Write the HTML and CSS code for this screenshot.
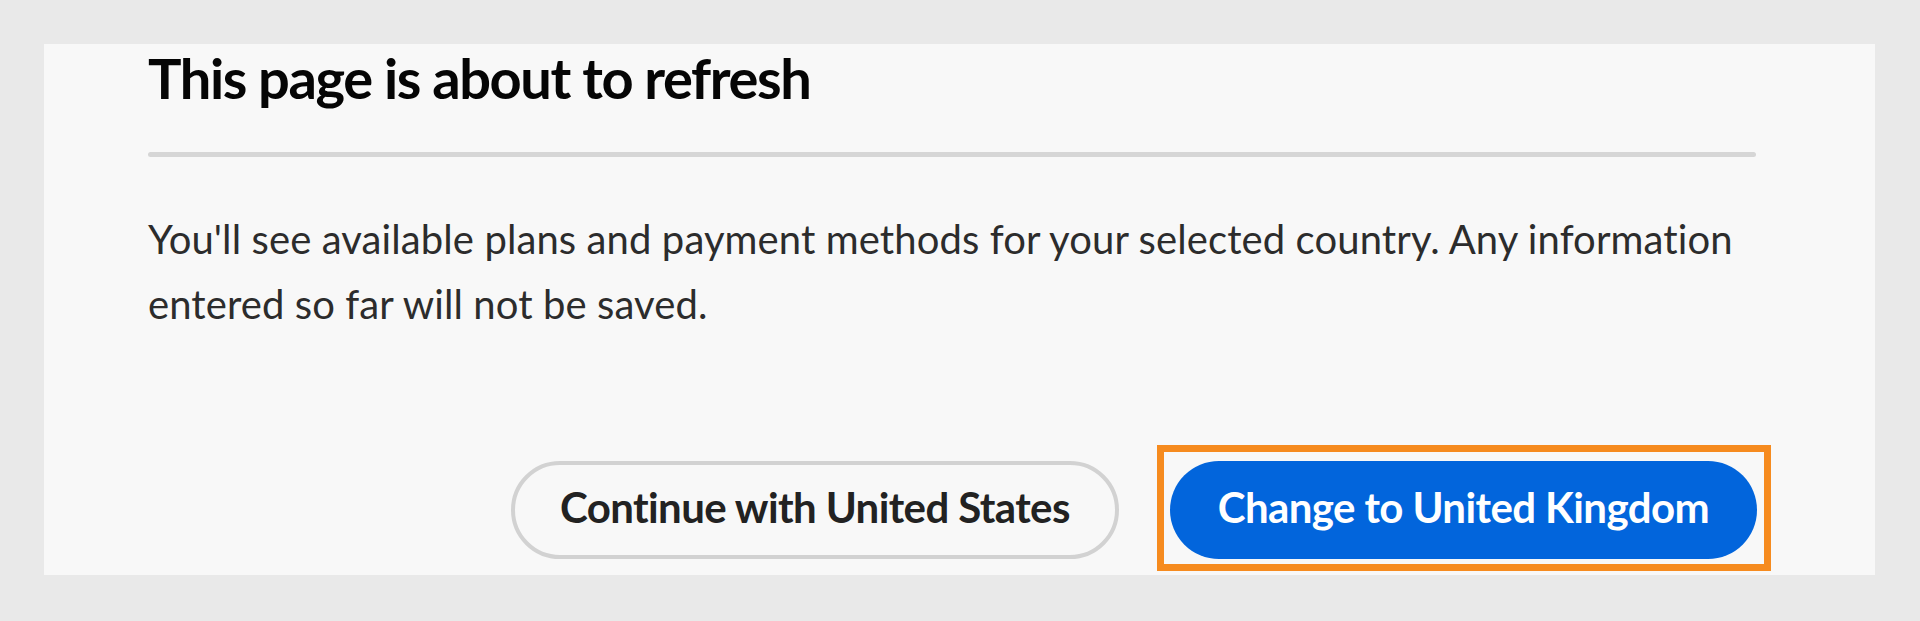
FILE: index.html
```html
<!DOCTYPE html>
<html lang="en">
<head>
<meta charset="utf-8">
<title>This page is about to refresh</title>
<link rel="stylesheet" href="styles.css">
</head>
<body>
  <div class="card">
    <h2 class="title">This page is about to refresh</h2>
    <hr class="divider">
    <p class="message">You'll see available plans and payment methods for your selected country. Any information entered so far will not be saved.</p>
    <div class="actions">
      <button class="btn btn-secondary" type="button">Continue with United States</button>
      <button class="btn btn-primary highlighted" type="button">Change to United Kingdom</button>
    </div>
  </div>
</body>
</html>
```

FILE: styles.css
```css
html, body {
  margin: 0;
  padding: 0;
  background: #e9e9e9;
}

body {
  padding: 44px 45px 46px 44px;
  font-family: Lato, "Open Sans", sans-serif;
}

.card {
  background: #f8f8f8;
  height: 531px;
  box-sizing: border-box;
  padding: 0 119px 16px 104px;
  display: flex;
  flex-direction: column;
}

.title {
  margin: 2px 0 0 0;
  font-size: 56px;
  line-height: 64px;
  font-weight: 700;
  letter-spacing: -1.4px;
  color: #050505;
}

.divider {
  margin: 42px 0 0 0;
  height: 5px;
  border: 0;
  border-radius: 3px;
  background: #d6d6d6;
}

.message {
  margin: 50px 0 0 0;
  font-size: 40px;
  line-height: 65px;
  letter-spacing: 0.1px;
  color: #2c2c2c;
}

.actions {
  margin-top: auto;
  display: flex;
  justify-content: flex-end;
  gap: 51px;
}

.btn {
  height: 98px;
  box-sizing: border-box;
  border-radius: 49px;
  padding: 0 48px 6px;
  font-family: Lato, "Open Sans", sans-serif;
  font-size: 42px;
  font-weight: 700;
  letter-spacing: -0.6px;
  cursor: pointer;
}

.btn-secondary {
  background: #f8f8f8;
  border: 4px solid #d2d2d2;
  padding-left: 45px;
  padding-right: 45px;
  color: #222;
}

.btn-primary {
  background: #0265dc;
  border: 0;
  color: #fff;
  position: relative;
  margin-right: -1px;
}

.highlighted::after {
  content: "";
  position: absolute;
  left: -13px;
  right: -14px;
  top: -16px;
  bottom: -12px;
  border: 7px solid #f68b1f;
}
```
